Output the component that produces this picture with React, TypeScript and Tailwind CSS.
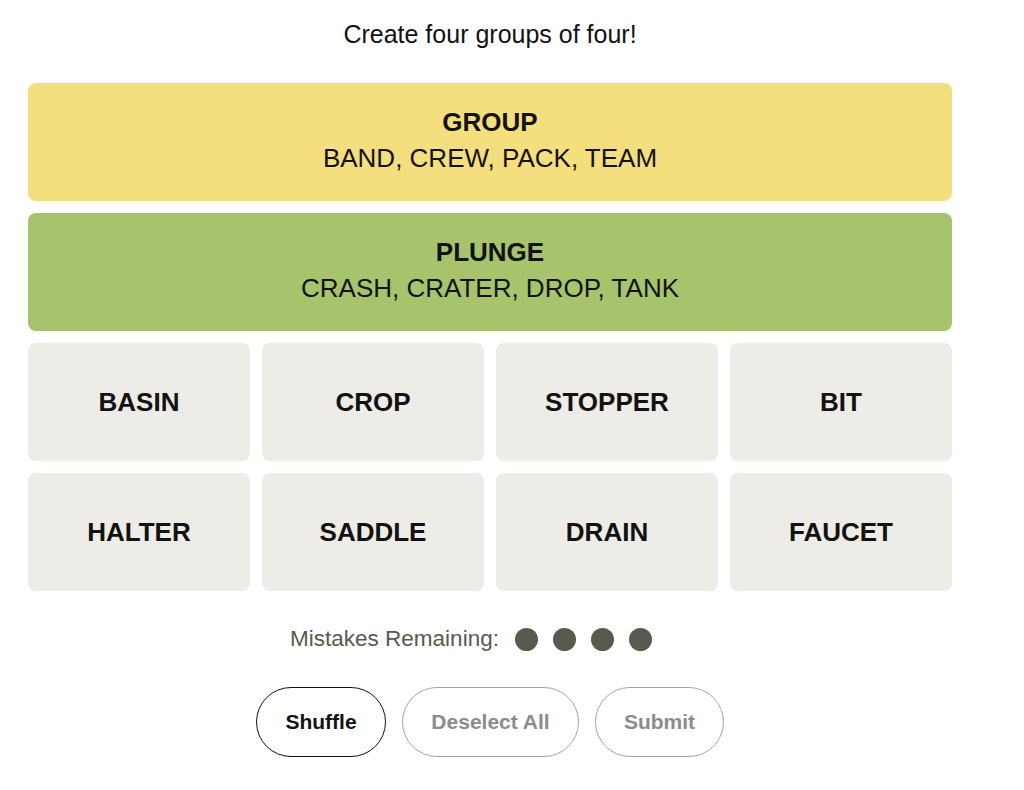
import * as React from "react";

const FONT = { fontFamily: '"Liberation Sans", Arial, sans-serif' };

const solved = [
    { title: "GROUP", members: "BAND, CREW, PACK, TEAM", color: "bg-[#f5de7d]" },
    { title: "PLUNGE", members: "CRASH, CRATER, DROP, TANK", color: "bg-[#a7c36b]" }
];

const words = ["BASIN", "CROP", "STOPPER", "BIT", "HALTER", "SADDLE", "DRAIN", "FAUCET"];

export default function App() {
    return (
        <div className="min-h-[790px] w-[1024px] bg-white text-[#121212]" style={FONT}>
            <div className="w-[980px]">
                <div className="flex flex-col items-center pt-[18px]">
                    <p className="text-[25px] leading-[32px]">Create four groups of four!</p>
                </div>

                <div className="ml-[28px] mt-[33px] flex w-[924px] flex-col gap-[12px]">
                    {solved.map((g) => (
                        <div
                            key={g.title}
                            className={`flex h-[118px] flex-col items-center justify-center rounded-[8px] ${g.color}`}
                        >
                            <div className="text-[26px] font-bold leading-[32px]">{g.title}</div>
                            <div className="text-[26px] leading-[40px]">{g.members}</div>
                        </div>
                    ))}

                    <div className="grid grid-cols-4 gap-[12px]">
                        {words.map((w) => (
                            <div
                                key={w}
                                className="flex h-[118px] items-center justify-center rounded-[8px] bg-[#edece6] text-[26px] font-bold"
                            >
                                {w}
                            </div>
                        ))}
                    </div>
                </div>

                <div className="mt-[34px] flex h-[28px] items-center justify-center gap-[16px] pr-[38px]">
                    <span className="text-[22.5px] leading-[28px] text-[#5a594e]">Mistakes Remaining:</span>
                    <div className="flex gap-[15px]">
                        {[0, 1, 2, 3].map((i) => (
                            <span key={i} className="block h-[23px] w-[23px] rounded-full bg-[#5a594e]" />
                        ))}
                    </div>
                </div>

                <div className="mt-[34px] flex justify-center gap-[16px]">
                    <button className="h-[70px] w-[130px] rounded-full border-[1.5px] border-[#121212] text-[21px] font-bold">
                        Shuffle
                    </button>
                    <button className="h-[70px] w-[177px] rounded-full border-[1.5px] border-[#a5a5a5] text-[21px] font-bold text-[#8c8c8c]">
                        Deselect All
                    </button>
                    <button className="h-[70px] w-[129px] rounded-full border-[1.5px] border-[#a5a5a5] text-[21px] font-bold text-[#8c8c8c]">
                        Submit
                    </button>
                </div>
            </div>
        </div>
    );
}
